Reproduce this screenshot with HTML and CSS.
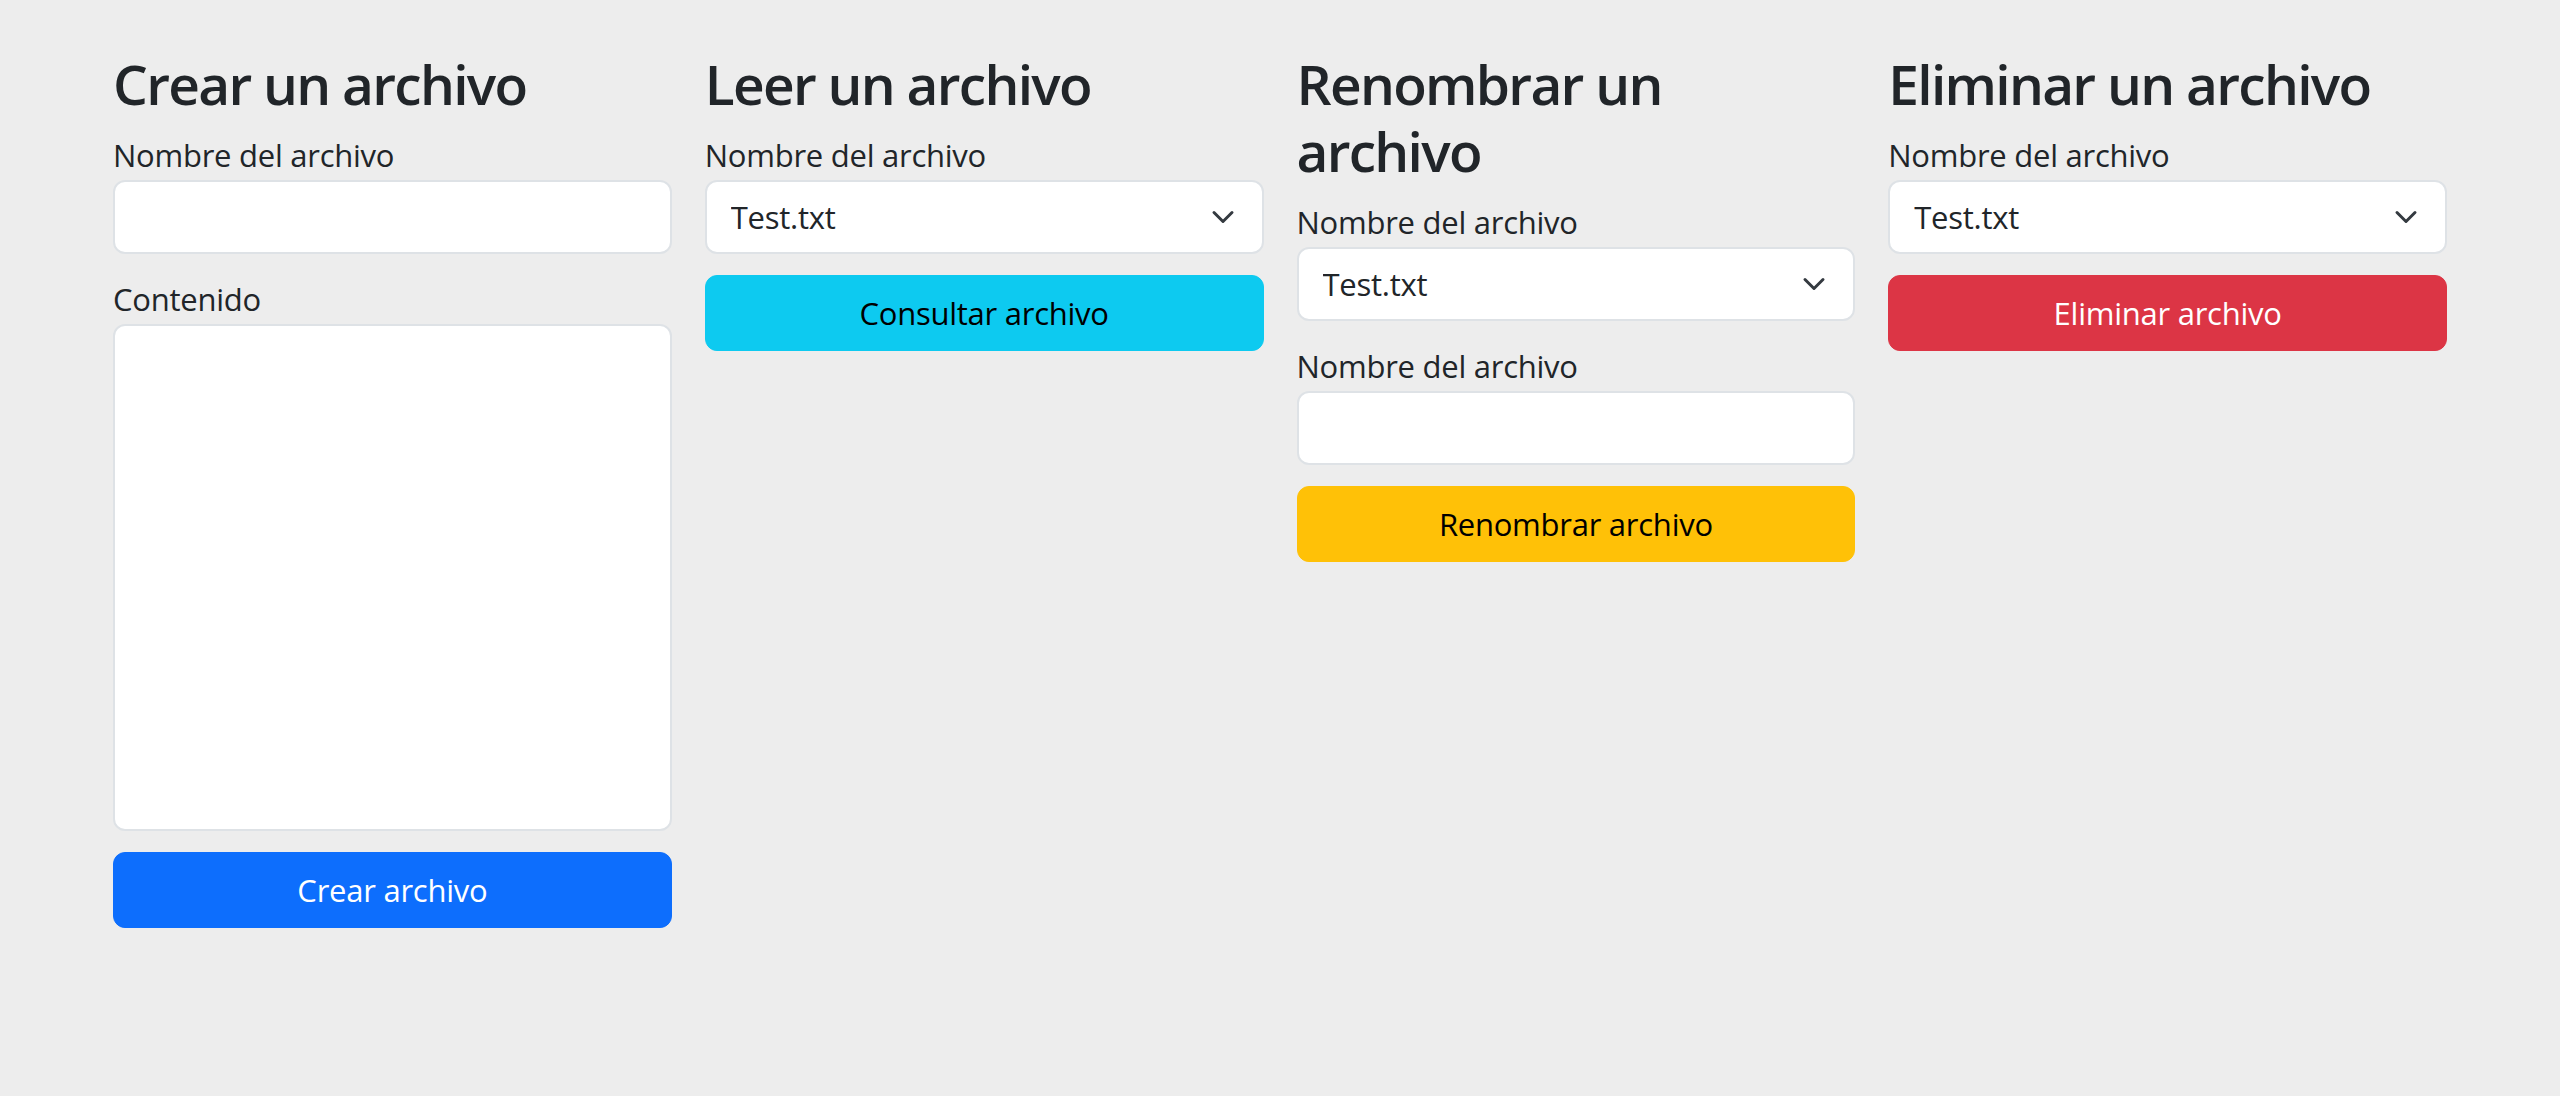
FILE: index.html
```html
<!DOCTYPE html>
<html lang="es">
<head>
<meta charset="utf-8">
<title>Archivos</title>
<link rel="stylesheet" href="styles.css">
</head>
<body>
<main class="page">
  <section class="col">
    <h3 class="title">Crear un archivo</h3>
    <label class="label" for="c-name">Nombre del archivo</label>
    <input class="field" id="c-name" type="text">
    <label class="label" for="c-content">Contenido</label>
    <textarea class="field area" id="c-content"></textarea>
    <button class="btn btn-primary" type="button">Crear archivo</button>
  </section>

  <section class="col">
    <h3 class="title">Leer un archivo</h3>
    <label class="label" for="r-name">Nombre del archivo</label>
    <div class="select-wrap">
      <select class="field select" id="r-name"><option>Test.txt</option></select>
      <svg class="chev" viewBox="0 0 16 16" width="32" height="24" aria-hidden="true"><path d="M2 5l6 6 6-6" fill="none" stroke="#343a40" stroke-width="2" stroke-linecap="round" stroke-linejoin="round"/></svg>
    </div>
    <button class="btn btn-info" type="button">Consultar archivo</button>
  </section>

  <section class="col">
    <h3 class="title">Renombrar un archivo</h3>
    <label class="label" for="n-old">Nombre del archivo</label>
    <div class="select-wrap">
      <select class="field select" id="n-old"><option>Test.txt</option></select>
      <svg class="chev" viewBox="0 0 16 16" width="32" height="24" aria-hidden="true"><path d="M2 5l6 6 6-6" fill="none" stroke="#343a40" stroke-width="2" stroke-linecap="round" stroke-linejoin="round"/></svg>
    </div>
    <label class="label" for="n-new">Nombre del archivo</label>
    <input class="field" id="n-new" type="text">
    <button class="btn btn-warning" type="button">Renombrar archivo</button>
  </section>

  <section class="col">
    <h3 class="title">Eliminar un archivo</h3>
    <label class="label" for="d-name">Nombre del archivo</label>
    <div class="select-wrap">
      <select class="field select" id="d-name"><option>Test.txt</option></select>
      <svg class="chev" viewBox="0 0 16 16" width="32" height="24" aria-hidden="true"><path d="M2 5l6 6 6-6" fill="none" stroke="#343a40" stroke-width="2" stroke-linecap="round" stroke-linejoin="round"/></svg>
    </div>
    <button class="btn btn-danger" type="button">Eliminar archivo</button>
  </section>
</main>
</body>
</html>
```
FILE: styles.css
```css
html, body {
  margin: 0;
  padding: 0;
  background: #ededed;
}

body {
  font-family: "Open Sans", "Noto Sans", sans-serif;
  color: #212529;
}

.page {
  display: grid;
  grid-template-columns: repeat(4, 1fr);
  column-gap: 33px;
  padding: 50px 113px 0;
  align-items: start;
}

.col {
  display: flex;
  flex-direction: column;
  min-width: 0;
}

.title {
  margin: 0 0 14px;
  font-size: 55px;
  line-height: 67px;
  font-weight: 600;
  letter-spacing: -1.7px;
  color: #212529;
}

.label {
  display: block;
  font-size: 31px;
  line-height: 48px;
  letter-spacing: -0.25px;
  margin-bottom: 1px;
  color: #212529;
}

.field {
  display: block;
  box-sizing: border-box;
  width: 100%;
  height: 74px;
  margin: 0 0 21px;
  padding: 11px 24px;
  font-family: inherit;
  font-size: 31px;
  line-height: 48px;
  letter-spacing: -0.25px;
  color: #212529;
  background: #fff;
  border: 2px solid #dee2e6;
  border-radius: 12px;
  outline: none;
}

.area {
  height: 507px;
  resize: none;
}

.select-wrap {
  position: relative;
  margin-bottom: 21px;
}

.select-wrap .field {
  margin-bottom: 0;
}

.select {
  appearance: none;
  -webkit-appearance: none;
  padding-right: 72px;
}

.chev {
  position: absolute;
  right: 25px;
  top: 25px;
  pointer-events: none;
}

.btn {
  display: block;
  box-sizing: border-box;
  width: 100%;
  height: 76px;
  padding: 0 24px;
  font-family: inherit;
  font-size: 31px;
  line-height: 48px;
  letter-spacing: -0.25px;
  border: 1px solid transparent;
  border-radius: 12px;
  cursor: pointer;
  text-align: center;
}

.btn-primary { background: #0d6efd; border-color: #0d6efd; color: #fff; }
.btn-info { background: #0dcaf0; border-color: #0dcaf0; color: #000; }
.btn-warning { background: #ffc107; border-color: #ffc107; color: #000; }
.btn-danger { background: #dc3545; border-color: #dc3545; color: #fff; }
```
